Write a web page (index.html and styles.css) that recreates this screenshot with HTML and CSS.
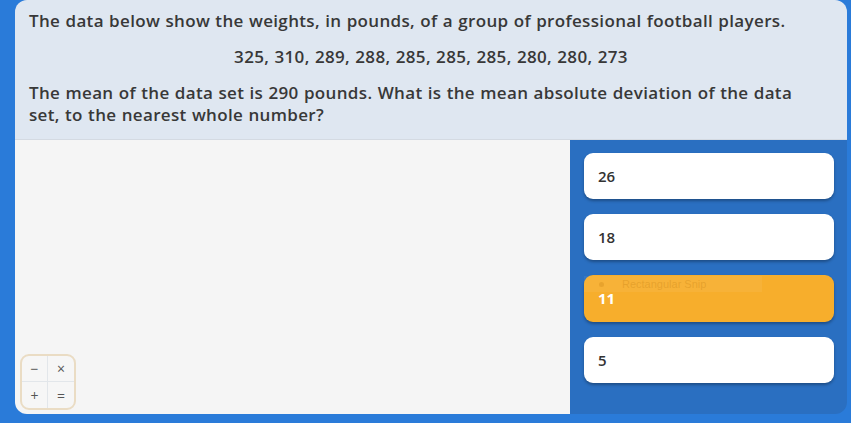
FILE: index.html
```html
<!DOCTYPE html>
<html>
<head>
<meta charset="utf-8">
<link rel="stylesheet" href="styles.css">
</head>
<body>
<div class="card">
  <div class="question">
    <p class="line">The data below show the weights, in pounds, of a group of professional football players.</p>
    <p class="line center">325, 310, 289, 288, 285, 285, 285, 280, 280, 273</p>
    <p class="line">The mean of the data set is 290 pounds. What is the mean absolute deviation of the data set, to the nearest whole number?</p>
  </div>
  <div class="bottom">
    <div class="work">
      <div class="calc">
        <span class="key">&minus;</span>
        <span class="key">&times;</span>
        <span class="key">+</span>
        <span class="key">=</span>
      </div>
    </div>
    <div class="answers">
      <div class="option">26</div>
      <div class="option">18</div>
      <div class="option selected">11
        <div class="snip"><span class="dot"></span>Rectangular Snip</div>
      </div>
      <div class="option">5</div>
    </div>
  </div>
</div>
</body>
</html>
```
FILE: styles.css
```css
html, body {
  margin: 0;
  padding: 0;
}
body {
  background: #2a7bd9;
  width: 851px;
  height: 423px;
  overflow: hidden;
  font-family: "Open Sans", "Noto Sans", sans-serif;
  color: #383838;
}
.card {
  margin-left: 15px;
  width: 832px;
  border-radius: 12px;
  overflow: hidden;
}
.question {
  background: #dfe7f1;
  padding: 10px 30px 13px 14px;
  border-bottom: 1px solid #d4dae2;
}
.line {
  margin: 0 0 14px 0;
  font-size: 17px;
  line-height: 22px;
  font-weight: 600;
  letter-spacing: 0.34px;
  word-spacing: 0.5px;
}
.line:last-child {
  margin-bottom: 0;
}
.center {
  text-align: center;
  padding-left: 16px;
}
.bottom {
  display: flex;
  height: 274px;
}
.work {
  width: 555px;
  background: #f5f5f5;
  display: flex;
  align-items: flex-end;
  padding: 0 0 4px 5px;
  box-sizing: border-box;
}
.calc {
  width: 56px;
  height: 56px;
  box-sizing: border-box;
  border: 2px solid #eadcc4;
  border-radius: 9px;
  background: #f6f6f6;
  display: grid;
  grid-template-columns: 1fr 1fr;
  grid-template-rows: 1fr 1fr;
  overflow: hidden;
}
.key {
  display: flex;
  align-items: center;
  justify-content: center;
  font-size: 14px;
  color: #555;
  border-color: #e2e6ea;
  border-style: solid;
  border-width: 0;
}
.key:nth-child(1) { border-right-width: 1px; border-bottom-width: 1px; }
.key:nth-child(2) { border-bottom-width: 1px; }
.key:nth-child(3) { border-right-width: 1px; }
.answers {
  flex: 1;
  background: #2a6fc1;
  padding: 13px 13px 0 14px;
  display: flex;
  flex-direction: column;
  gap: 15px;
}
.option {
  position: relative;
  height: 46px;
  background: #fff;
  border-radius: 9px;
  box-shadow: 0 2px 3px rgba(0, 0, 0, 0.3);
  display: flex;
  align-items: center;
  padding-left: 14px;
  font-size: 15px;
  font-weight: 600;
  color: #333;
}
.option.selected {
  background: #f7ae2c;
  color: #fff;
  font-weight: 700;
  height: 47px;
  align-items: flex-start;
  padding-top: 13px;
  box-sizing: border-box;
}
.snip {
  position: absolute;
  left: 0;
  top: 1px;
  width: 178px;
  height: 16px;
  background: rgba(255, 255, 255, 0.06);
  font-family: "Liberation Sans", sans-serif;
  font-size: 11px;
  font-weight: 400;
  color: rgba(200, 130, 20, 0.35);
  display: flex;
  align-items: center;
  padding-left: 38px;
  box-sizing: border-box;
}
.dot {
  position: absolute;
  left: 15px;
  top: 6px;
  width: 5px;
  height: 5px;
  border-radius: 50%;
  background: rgba(200, 130, 20, 0.3);
}
```
